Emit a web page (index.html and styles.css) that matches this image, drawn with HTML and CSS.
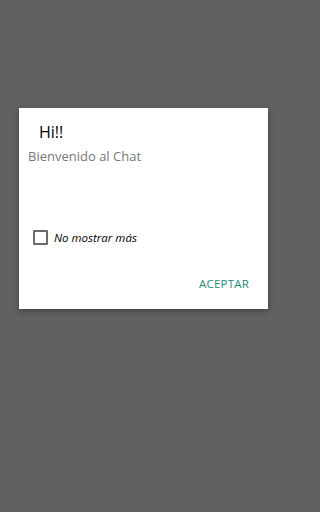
FILE: index.html
```html
<!DOCTYPE html>
<html lang="es">
<head>
<meta charset="utf-8">
<link rel="stylesheet" href="styles.css">
</head>
<body>
<div class="dialog">
  <div class="title">Hi!!</div>
  <div class="message">Bienvenido al Chat</div>
  <label class="check-row">
    <span class="box"></span>
    <span class="check-label">No mostrar más</span>
  </label>
  <div class="actions">
    <span class="btn">ACEPTAR</span>
  </div>
</div>
</body>
</html>
```
FILE: styles.css
```css
html, body {
  margin: 0;
  padding: 0;
  height: 100%;
}
body {
  background: #616161;
  font-family: "Open Sans", "Noto Sans", sans-serif;
  padding-top: 108px;
  box-sizing: border-box;
}
.dialog {
  margin-left: 19px;
  width: 249px;
  height: 201px;
  background: #ffffff;
  box-shadow: 0 2px 6px rgba(0,0,0,0.35);
  display: flex;
  flex-direction: column;
  box-sizing: border-box;
}
.title {
  font-size: 16px;
  color: #000;
  padding-left: 20px;
  margin-top: 13px;
  line-height: 22px;
}
.message {
  font-size: 13px;
  color: #777;
  padding-left: 9px;
  margin-top: 3px;
  line-height: 20px;
}
.check-row {
  display: flex;
  align-items: center;
  margin-top: 64px;
  padding-left: 14px;
  gap: 6px;
}
.box {
  width: 11px;
  height: 11px;
  border: 2px solid #6b6b6b;
  border-radius: 1px;
}
.check-label {
  font-size: 11.5px;
  font-style: italic;
  color: #000;
}
.actions {
  display: flex;
  justify-content: flex-end;
  padding-right: 19px;
  margin-top: 31px;
}
.btn {
  font-size: 11.5px;
  color: #1f8a7c;
  letter-spacing: 0.2px;
}
```
